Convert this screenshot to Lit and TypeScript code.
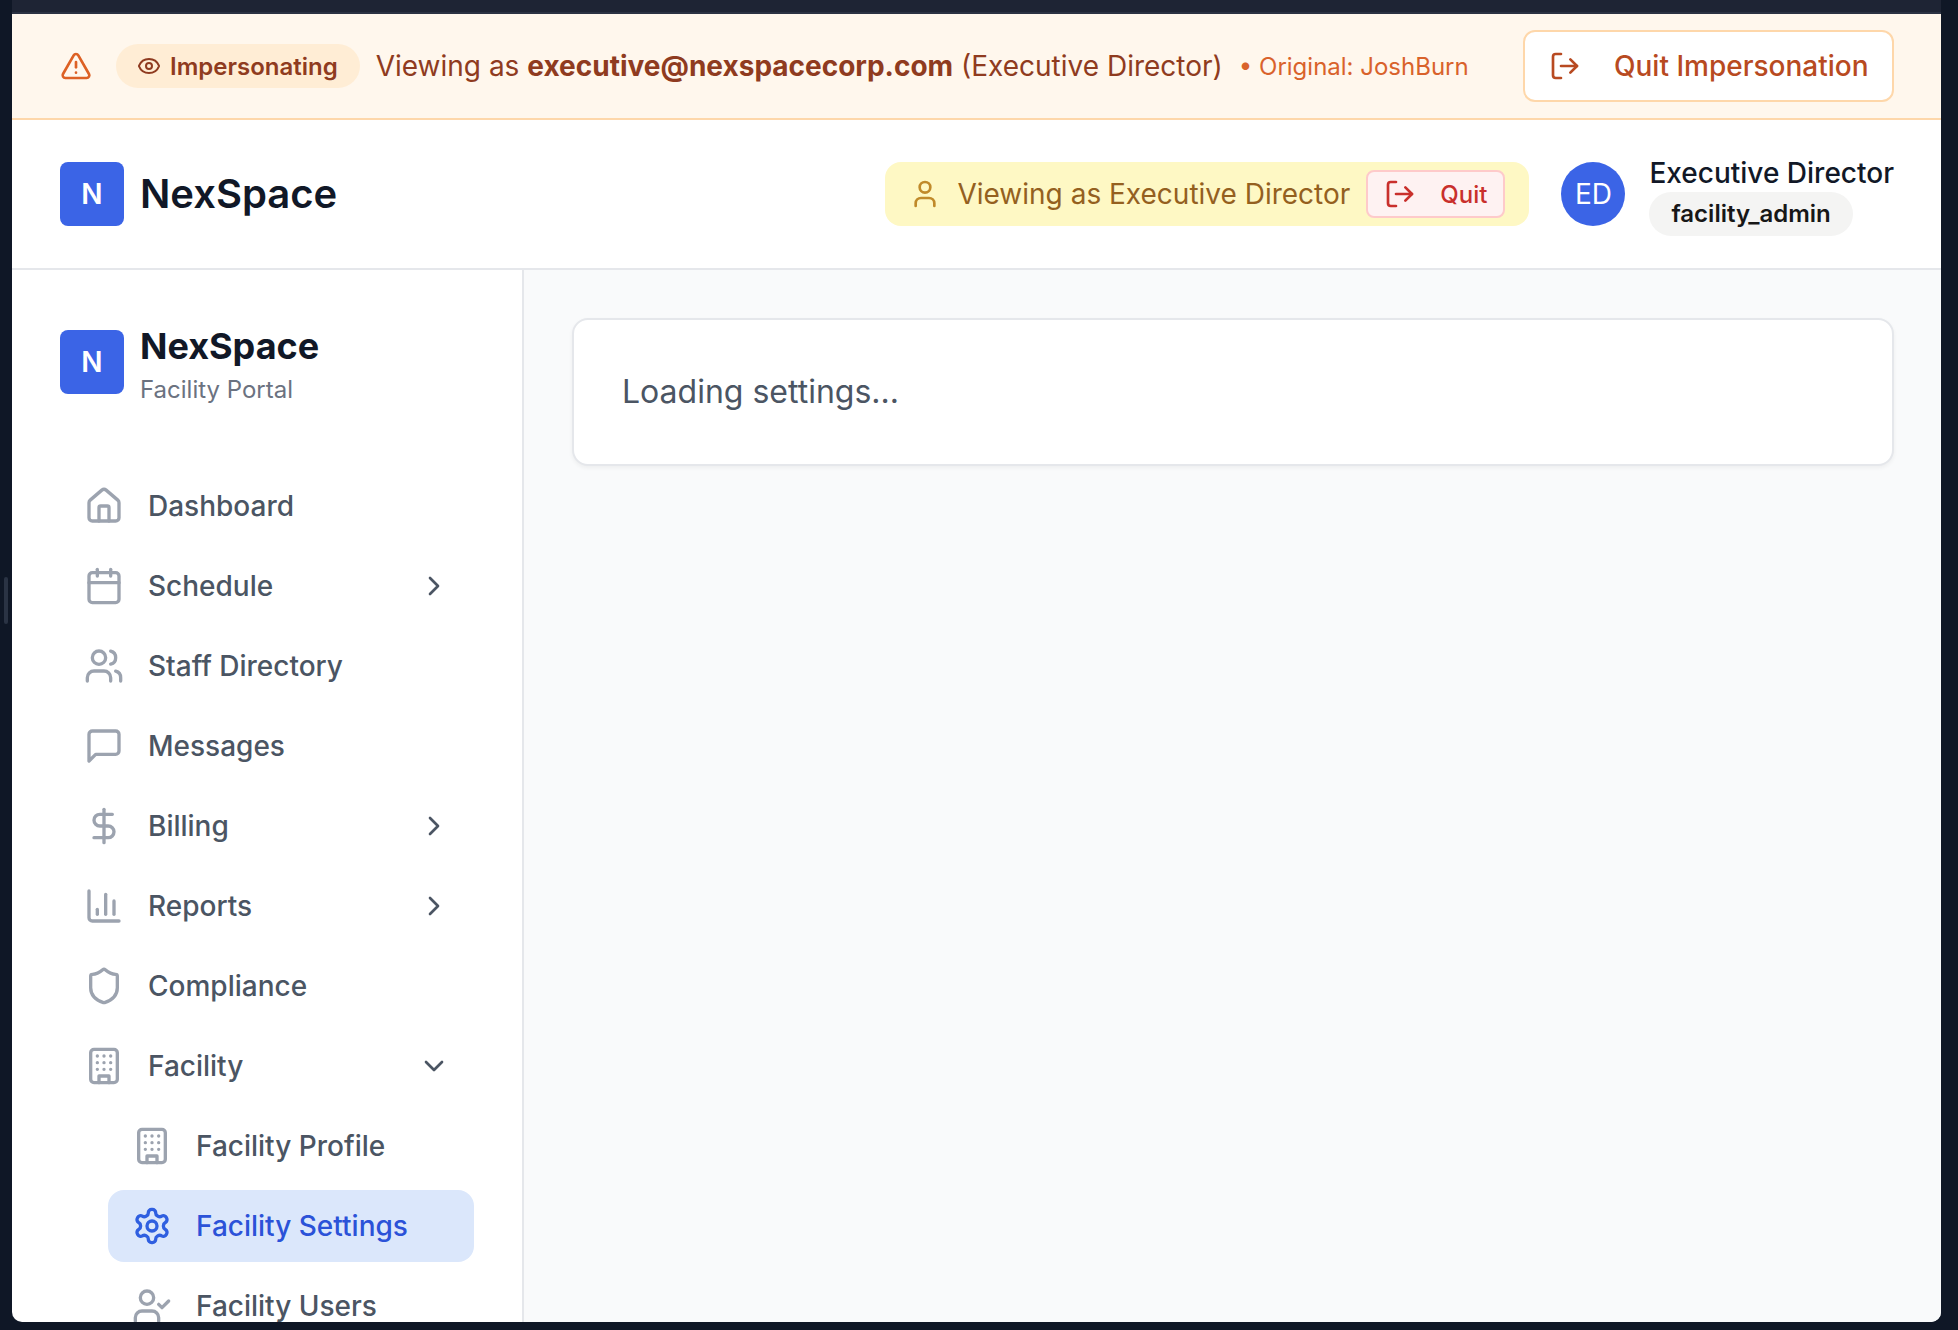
import { LitElement, html, css, svg } from 'lit'
import { customElement } from 'lit/decorators.js'

const icons: Record<string, any> = {
  alert: svg`<path d="m21.73 18-8-14a2 2 0 0 0-3.48 0l-8 14A2 2 0 0 0 4 21h16a2 2 0 0 0 1.73-3"/><path d="M12 9v4"/><path d="M12 17h.01"/>`,
  eye: svg`<path d="M2.062 12.348a1 1 0 0 1 0-.696 10.75 10.75 0 0 1 19.876 0 1 1 0 0 1 0 .696 10.75 10.75 0 0 1-19.876 0"/><circle cx="12" cy="12" r="3"/>`,
  logout: svg`<path d="M9 21H5a2 2 0 0 1-2-2V5a2 2 0 0 1 2-2h4"/><polyline points="16 17 21 12 16 7"/><line x1="21" y1="12" x2="9" y2="12"/>`,
  user: svg`<path d="M19 21v-2a4 4 0 0 0-4-4H9a4 4 0 0 0-4 4v2"/><circle cx="12" cy="7" r="4"/>`,
  home: svg`<path d="M15 21v-8a1 1 0 0 0-1-1h-4a1 1 0 0 0-1 1v8"/><path d="M3 10a2 2 0 0 1 .709-1.528l7-5.999a2 2 0 0 1 2.582 0l7 5.999A2 2 0 0 1 21 10v9a2 2 0 0 1-2 2H5a2 2 0 0 1-2-2z"/>`,
  calendar: svg`<path d="M8 2v4"/><path d="M16 2v4"/><rect x="3" y="4" width="18" height="18" rx="2"/><path d="M3 10h18"/>`,
  users: svg`<path d="M16 21v-2a4 4 0 0 0-4-4H6a4 4 0 0 0-4 4v2"/><circle cx="9" cy="7" r="4"/><path d="M22 21v-2a4 4 0 0 0-3-3.87"/><path d="M16 3.13a4 4 0 0 1 0 7.75"/>`,
  message: svg`<path d="M21 15a2 2 0 0 1-2 2H7l-4 4V5a2 2 0 0 1 2-2h14a2 2 0 0 1 2 2z"/>`,
  dollar: svg`<line x1="12" y1="2" x2="12" y2="22"/><path d="M17 5H9.5a3.5 3.5 0 0 0 0 7h5a3.5 3.5 0 0 1 0 7H6"/>`,
  chart: svg`<path d="M3 3v16a2 2 0 0 0 2 2h16"/><path d="M18 17V9"/><path d="M13 17V5"/><path d="M8 17v-3"/>`,
  shield: svg`<path d="M20 13c0 5-3.5 7.5-7.66 8.95a1 1 0 0 1-.67-.01C7.5 20.5 4 18 4 13V6a1 1 0 0 1 1-1c2 0 4.5-1.2 6.24-2.72a1.17 1.17 0 0 1 1.52 0C14.51 3.81 17 5 19 5a1 1 0 0 1 1 1z"/>`,
  building: svg`<rect x="4" y="2" width="16" height="20" rx="2"/><path d="M9 22v-4h6v4"/><path d="M8 6h.01M12 6h.01M16 6h.01M8 10h.01M12 10h.01M16 10h.01M8 14h.01M12 14h.01M16 14h.01"/>`,
  gear: svg`<path d="M12.22 2h-.44a2 2 0 0 0-2 2v.18a2 2 0 0 1-1 1.73l-.43.25a2 2 0 0 1-2 0l-.15-.08a2 2 0 0 0-2.73.73l-.22.38a2 2 0 0 0 .73 2.73l.15.1a2 2 0 0 1 1 1.72v.51a2 2 0 0 1-1 1.74l-.15.09a2 2 0 0 0-.73 2.73l.22.38a2 2 0 0 0 2.73.73l.15-.08a2 2 0 0 1 2 0l.43.25a2 2 0 0 1 1 1.73V20a2 2 0 0 0 2 2h.44a2 2 0 0 0 2-2v-.18a2 2 0 0 1 1-1.73l.43-.25a2 2 0 0 1 2 0l.15.08a2 2 0 0 0 2.73-.73l.22-.39a2 2 0 0 0-.73-2.73l-.15-.08a2 2 0 0 1-1-1.74v-.5a2 2 0 0 1 1-1.74l.15-.09a2 2 0 0 0 .73-2.73l-.22-.38a2 2 0 0 0-2.73-.73l-.15.08a2 2 0 0 1-2 0l-.43-.25a2 2 0 0 1-1-1.73V4a2 2 0 0 0-2-2z"/><circle cx="12" cy="12" r="3"/>`,
  userCheck: svg`<path d="M16 21v-2a4 4 0 0 0-4-4H6a4 4 0 0 0-4 4v2"/><circle cx="9" cy="7" r="4"/><polyline points="16 11 18 13 22 9"/>`,
  right: svg`<path d="m9 18 6-6-6-6"/>`,
  down: svg`<path d="m6 9 6 6 6-6"/>`,
}

const icon = (name: string, cls = '') => html`<svg class="icon ${cls}" viewBox="0 0 24 24" fill="none" stroke="currentColor" stroke-width="2" stroke-linecap="round" stroke-linejoin="round">${icons[name]}</svg>`

type NavItem = { label: string; icon: string; chevron?: string; sub?: boolean; active?: boolean }

const nav: NavItem[] = [
  { label: 'Dashboard', icon: 'home' },
  { label: 'Schedule', icon: 'calendar', chevron: 'right' },
  { label: 'Staff Directory', icon: 'users' },
  { label: 'Messages', icon: 'message' },
  { label: 'Billing', icon: 'dollar', chevron: 'right' },
  { label: 'Reports', icon: 'chart', chevron: 'right' },
  { label: 'Compliance', icon: 'shield' },
  { label: 'Facility', icon: 'building', chevron: 'down' },
  { label: 'Facility Profile', icon: 'building', sub: true },
  { label: 'Facility Settings', icon: 'gear', sub: true, active: true },
  { label: 'Facility Users', icon: 'userCheck', sub: true },
]

@customElement('app-root')
export class AppRoot extends LitElement {
  static styles = css`
    :host {
      display: block;
      position: relative;
      width: 1958px;
      height: 1330px;
      overflow: hidden;
      background: #0f1726;
      font-family: Inter, "Liberation Sans", sans-serif;
    }
    * { box-sizing: border-box; }
    .frame {
      display: flex;
      flex-direction: column;
      height: 1330px;
      padding: 0 17px 8px 12px;
    }
    .topstrip {
      height: 14px;
      flex: none;
      background: #1e2434;
      border-bottom: 2px solid #2b3243;
    }
    .handle {
      position: absolute;
      left: 4px;
      top: 577px;
      width: 4px;
      height: 47px;
      border-radius: 2px;
      background: #2a3344;
    }
    .window {
      flex: 1;
      min-height: 0;
      display: flex;
      flex-direction: column;
      overflow: hidden;
      background: #fff;
      border-radius: 0 0 10px 10px;
    }
    .icon { display: block; flex: none; width: 40px; height: 40px; }

    .banner {
      flex: none;
      height: 106px;
      display: flex;
      align-items: center;
      justify-content: space-between;
      padding: 0 47px 0 48px;
      background: #fff7ed;
      border-bottom: 2px solid #fed7aa;
      color: #8f3b20;
    }
    .banner-left { display: flex; align-items: center; white-space: nowrap; }
    .warn { width: 32px; height: 32px; color: #dd6125; margin-right: 24px; }
    .pill {
      display: flex;
      align-items: center;
      gap: 9px;
      height: 44px;
      padding: 0 22px 0 21px;
      border-radius: 22px;
      background: #ffedd5;
      font-size: 24px;
      font-weight: 600;
      margin-right: 16px;
    }
    .pill .icon { width: 24px; height: 24px; }
    .viewing { font-size: 28px; line-height: 40px; }
    .viewing b { font-weight: 700; }
    .original { font-size: 24px; color: #d9622b; margin-left: 16px; }
    .quit-big {
      display: flex;
      align-items: center;
      gap: 33px;
      width: 371px;
      height: 72px;
      padding: 0 24px;
      background: #fff;
      border: 2px solid #fed7aa;
      border-radius: 12px;
      color: #b84a21;
      font-size: 28px;
      font-weight: 500;
      white-space: nowrap;
    }
    .quit-big .icon { width: 32px; height: 32px; }

    .header {
      flex: none;
      height: 150px;
      display: flex;
      align-items: center;
      justify-content: space-between;
      padding: 0 47px 0 48px;
      border-bottom: 2px solid #e5e7eb;
    }
    .brand { display: flex; align-items: center; gap: 16px; }
    .logo {
      flex: none;
      width: 64px;
      height: 64px;
      display: flex;
      align-items: center;
      justify-content: center;
      border-radius: 8px;
      background: #3b64e6;
      color: #fff;
      font-size: 28px;
      font-weight: 600;
    }
    .brand-name { font-size: 40px; font-weight: 600; color: #111827; margin-bottom: 2px; }
    .header-right { display: flex; align-items: center; }
    .viewing-pill {
      display: flex;
      align-items: center;
      gap: 16px;
      height: 64px;
      padding: 0 24px;
      border-radius: 16px;
      background: #fef8c4;
      color: #94601f;
      font-size: 28px;
      margin-right: 32px;
    }
    .viewing-pill > .icon { width: 32px; height: 32px; color: #c08a2a; }
    .quit-small {
      display: flex;
      align-items: center;
      gap: 24px;
      height: 48px;
      padding: 0 16px;
      background: #fef2f2;
      border: 2px solid #fecaca;
      border-radius: 8px;
      color: #c9302c;
      font-size: 24px;
      font-weight: 500;
    }
    .quit-small .icon { width: 32px; height: 32px; }
    .avatar {
      flex: none;
      width: 64px;
      height: 64px;
      display: flex;
      align-items: center;
      justify-content: center;
      border-radius: 50%;
      background: #3b64e6;
      color: #fff;
      font-size: 28px;
      margin-right: 24px;
    }
    .who { display: flex; flex-direction: column; align-items: flex-start; gap: 2px; }
    .who-name { font-size: 28px; font-weight: 500; line-height: 34px; color: #111827; margin-top: 3px; }
    .role {
      display: flex;
      align-items: center;
      height: 44px;
      padding: 0 22px;
      border-radius: 22px;
      background: #f4f4f3;
      color: #171717;
      font-size: 24px;
      font-weight: 600;
    }

    .body { flex: 1; min-height: 0; display: flex; }
    .sidebar {
      flex: none;
      width: 512px;
      overflow: hidden;
      padding: 60px 48px 0;
      border-right: 2px solid #e5e7eb;
    }
    .side-brand { display: flex; align-items: flex-start; gap: 16px; margin-bottom: 64px; }
    .side-name { font-size: 36px; font-weight: 700; line-height: 32px; color: #111827; }
    .side-sub { font-size: 24px; line-height: 32px; color: #6b7280; margin-top: 12px; }
    .nav { display: flex; flex-direction: column; gap: 8px; }
    .row {
      flex: none;
      display: flex;
      align-items: center;
      gap: 24px;
      height: 72px;
      padding: 0 24px;
      border-radius: 16px;
      color: #4b5563;
      font-size: 28px;
      font-weight: 500;
    }
    .row > .icon:first-child { color: #9ca3af; }
    .row.sub { margin-left: 48px; }
    .row.active { background: #dbe7fb; color: #2b52d8; }
    .row.active > .icon:first-child { color: #2f5fe0; }
    .row .chev { width: 32px; height: 32px; margin-left: auto; color: #4b5563; }

    .main { flex: 1; min-width: 0; padding: 48px 47px 48px 48px; background: #f9fafb; }
    .card {
      padding: 48px;
      background: #fff;
      border: 2px solid #e5e7eb;
      border-radius: 16px;
      box-shadow: 0 2px 4px rgba(0, 0, 0, 0.05);
      color: #4b5563;
      font-size: 32px;
      line-height: 48px;
    }
  `

  renderRow(item: NavItem) {
    const cls = `row${item.sub ? ' sub' : ''}${item.active ? ' active' : ''}`
    return html`
      <div class=${cls}>
        ${icon(item.icon)}
        <span>${item.label}</span>
        ${item.chevron ? icon(item.chevron, 'chev') : ''}
      </div>
    `
  }

  render() {
    return html`
      <div class="handle"></div>
      <div class="frame">
        <div class="topstrip"></div>
        <div class="window">
          <div class="banner">
            <div class="banner-left">
              ${icon('alert', 'warn')}
              <div class="pill">${icon('eye')}<span>Impersonating</span></div>
              <span class="viewing">Viewing as <b>executive@nexspacecorp.com</b> (Executive Director)</span>
              <span class="original">• Original: JoshBurn</span>
            </div>
            <div class="quit-big">${icon('logout')}<span>Quit Impersonation</span></div>
          </div>
          <div class="header">
            <div class="brand">
              <div class="logo">N</div>
              <span class="brand-name">NexSpace</span>
            </div>
            <div class="header-right">
              <div class="viewing-pill">
                ${icon('user')}
                <span>Viewing as Executive Director</span>
                <div class="quit-small">${icon('logout')}<span>Quit</span></div>
              </div>
              <div class="avatar">ED</div>
              <div class="who">
                <span class="who-name">Executive Director</span>
                <span class="role">facility_admin</span>
              </div>
            </div>
          </div>
          <div class="body">
            <aside class="sidebar">
              <div class="side-brand">
                <div class="logo">N</div>
                <div>
                  <div class="side-name">NexSpace</div>
                  <div class="side-sub">Facility Portal</div>
                </div>
              </div>
              <nav class="nav">${nav.map((item) => this.renderRow(item))}</nav>
            </aside>
            <main class="main">
              <div class="card">Loading settings...</div>
            </main>
          </div>
        </div>
      </div>
    `
  }
}
